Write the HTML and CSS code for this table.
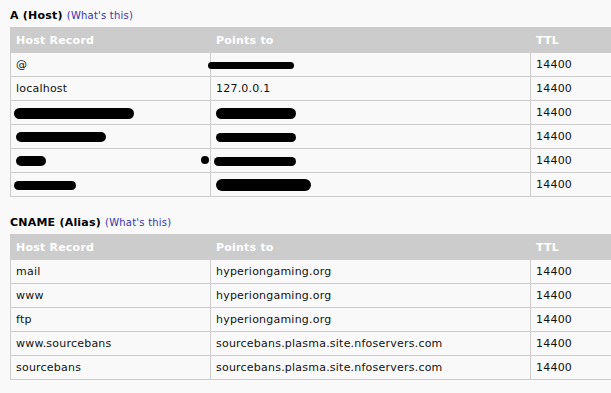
FILE: index.html
```html
<!DOCTYPE html>
<html>
<head>
<meta charset="utf-8">
<link rel="stylesheet" href="styles.css">
</head>
<body>
<div class="page">
  <section class="block">
    <h3 class="title">A (Host) <a class="help" href="#">(What's this)</a></h3>
    <table class="records">
      <colgroup><col class="c1"><col class="c2"><col class="c3"></colgroup>
      <thead><tr><th>Host Record</th><th>Points to</th><th>TTL</th></tr></thead>
      <tbody>
        <tr><td>@</td><td><span class="redact r-a"></span></td><td>14400</td></tr>
        <tr><td>localhost</td><td>127.0.0.1</td><td>14400</td></tr>
        <tr><td><span class="redact r-b"></span></td><td><span class="redact r-c"></span></td><td>14400</td></tr>
        <tr><td><span class="redact r-d"></span></td><td><span class="redact r-e"></span></td><td>14400</td></tr>
        <tr><td class="dotcell"><span class="redact r-f"></span><span class="dot"></span></td><td><span class="redact r-g"></span></td><td>14400</td></tr>
        <tr><td><span class="redact r-h"></span></td><td><span class="redact r-i"></span></td><td>14400</td></tr>
      </tbody>
    </table>
  </section>
  <section class="block">
    <h3 class="title">CNAME (Alias) <a class="help" href="#">(What's this)</a></h3>
    <table class="records">
      <colgroup><col class="c1"><col class="c2"><col class="c3"></colgroup>
      <thead><tr><th>Host Record</th><th>Points to</th><th>TTL</th></tr></thead>
      <tbody>
        <tr><td>mail</td><td>hyperiongaming.org</td><td>14400</td></tr>
        <tr><td>www</td><td>hyperiongaming.org</td><td>14400</td></tr>
        <tr><td>ftp</td><td>hyperiongaming.org</td><td>14400</td></tr>
        <tr><td>www.sourcebans</td><td>sourcebans.plasma.site.nfoservers.com</td><td>14400</td></tr>
        <tr><td>sourcebans</td><td>sourcebans.plasma.site.nfoservers.com</td><td>14400</td></tr>
      </tbody>
    </table>
  </section>
</div>
</body>
</html>
```
FILE: styles.css
```css
html, body {
  margin: 0;
  padding: 0;
  background: #f9f9f9;
  overflow: hidden;
}
.page {
  padding: 9px 0 0 10px;
  font-family: "DejaVu Sans", Verdana, sans-serif;
  font-size: 11px;
  letter-spacing: 0.22px;
  color: #111;
}
.block { margin-bottom: 19px; }
.title {
  margin: 0 0 5px 0;
  font-size: 11px;
  font-weight: bold;
  line-height: 13px;
  color: #000;
}
.help {
  font-weight: normal;
  font-size: 10px;
  color: #3333aa;
  text-decoration: none;
}
.records {
  border-collapse: collapse;
  width: 610px;
  table-layout: fixed;
}
.c1 { width: 200px; }
.c2 { width: 320px; }
.c3 { width: 90px; }
.records th {
  background: #cccccc;
  color: #ffffff;
  font-weight: bold;
  text-align: left;
  height: 25px;
  padding: 0 5px;
  border: 1px solid #cccccc;
  box-sizing: border-box;
}
.records td {
  height: 24px;
  padding: 0 5px;
  border: 1px solid #cccccc;
  box-sizing: border-box;
  white-space: nowrap;
  overflow: visible;
}
.redact {
  display: inline-block;
  height: 10px;
  background: #000;
  border-radius: 6px;
  vertical-align: middle;
}
.r-a { width: 86px; height: 7px; margin-left: -8px; }
.r-b { width: 120px; height: 11px; margin-left: -2px; }
.r-c { width: 80px; height: 11px; }
.r-d { width: 90px; height: 10px; }
.r-e { width: 80px; height: 9px; }
.r-f { width: 30px; height: 10px; }
.r-g { width: 82px; height: 9px; margin-left: -2px; }
.r-h { width: 62px; height: 9px; margin-left: -2px; }
.r-i { width: 95px; height: 12px; }
.dotcell { position: relative; }
.dot {
  position: absolute;
  left: 190px;
  top: 7px;
  width: 8px;
  height: 8px;
  border-radius: 50%;
  background: #000;
}
```
